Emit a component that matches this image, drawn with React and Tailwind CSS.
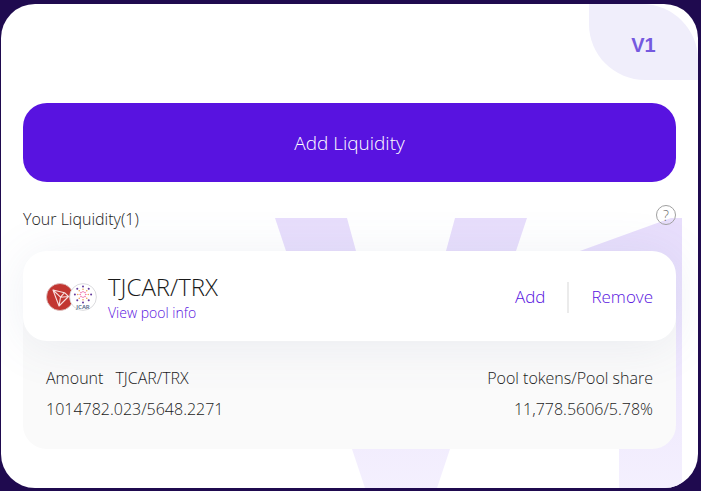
import { useId } from 'react'

const POOLS = [
  {
    pair: 'TJCAR/TRX',
    amount: '1014782.023/5648.2271',
    share: '11,778.5606/5.78%',
  },
]

function Watermark() {
  const id = useId()

  return (
    <svg
      className="absolute right-4 bottom-0 w-[407px] h-[270px] pointer-events-none"
      viewBox="0 0 407 270"
      aria-hidden="true"
    >
      <defs>
        <linearGradient id={id} x1="0" y1="0" x2="0" y2="1">
          <stop offset="0" stopColor="#e8defc" />
          <stop offset="0.15" stopColor="#e8dffc" />
          <stop offset="1" stopColor="#f4f0fe" />
        </linearGradient>
      </defs>
      <path
        fill={`url(#${id})`}
        d="M0 0H72L126 198L180 0H252L162 270H90ZM396 0H407V270H344V50L280 42L396 0Z"
      />
    </svg>
  )
}

function TronLogo() {
  return (
    <svg className="w-7 h-7" viewBox="0 0 28 28" aria-hidden="true">
      <circle cx="14" cy="14" r="13.5" fill="#c23631" stroke="#dcc5c5" strokeWidth="0.8" />
      <path
        d="M7 7L18.5 9.7L22.5 13.5L13 23Z M7 7L14.5 14.2L22.5 13.5 M14.5 14.2L18.5 9.7 M14.5 14.2L13 23"
        fill="none"
        stroke="#f8dfdf"
        strokeWidth="1.1"
        strokeLinejoin="round"
      />
    </svg>
  )
}

function JcarLogo() {
  const rays = [0, 45, 90, 135, 180, 225, 270, 315]

  return (
    <svg className="w-7 h-7" viewBox="0 0 28 28" aria-hidden="true">
      <circle cx="14" cy="14" r="13.4" fill="#fff" stroke="#d2d2d6" strokeWidth="0.8" />
      {rays.map((a) => (
        <g key={a} transform={`rotate(${a} 14 11.5)`}>
          <circle cx="14" cy="8.7" r="0.8" fill="#f06fa8" />
          <circle cx="14" cy="6.2" r="0.8" fill="#f4a65c" />
          <circle cx="14" cy="3.4" r="1" fill="#643a9c" />
        </g>
      ))}
      <text
        x="14"
        y="25.5"
        textAnchor="middle"
        fontSize="6"
        fontWeight="600"
        fill="#47617f"
      >
        JCAR
      </text>
    </svg>
  )
}

function PoolCard({ pair, amount, share }) {
  return (
    <article>
      <div className="relative z-10 flex items-center h-[90px] px-[23px] bg-white rounded-3xl shadow-[0_4px_50px_rgba(86,112,157,0.1)]">
        <div className="flex shrink-0 pt-0.5">
          <TronLogo />
          <div className="-ml-[5px]">
            <JcarLogo />
          </div>
        </div>
        <div className="ml-[11px] pt-1.5">
          <h2 className="text-2xl leading-7">{pair}</h2>
          <a href="#pool" className="block text-sm leading-6 text-[#5813e0]">
            View pool info
          </a>
        </div>
        <div className="ml-auto pt-0.5 flex items-center text-[17px] leading-6 text-[#5813e0]">
          <button type="button">Add</button>
          <span className="w-0.5 h-[31px] mx-[22px] bg-[#ebebeb]" />
          <button type="button">Remove</button>
        </div>
      </div>

      {/* Position details */}
      <dl className="relative -mt-6 flex justify-between px-[23px] pt-[46px] pb-6 bg-[#fafafa] rounded-b-3xl text-base leading-[31px]">
        <div>
          <dt className="flex gap-3">
            <span>Amount</span>
            <span>{pair}</span>
          </dt>
          <dd>{amount}</dd>
        </div>
        <div className="text-right">
          <dt>Pool tokens/Pool share</dt>
          <dd>{share}</dd>
        </div>
      </dl>
    </article>
  )
}

export default function App() {
  return (
    <div className="min-h-screen pt-1 pr-[3px] pb-[3px] pl-px bg-[#1f0a4f] font-['Open_Sans',sans-serif] font-light text-[#1a1a1a]">
      <main className="relative overflow-hidden rounded-[34px] bg-white px-[22px] pb-[39px]">
        <Watermark />

        <div className="relative -mr-[22px] flex justify-end">
          <span className="w-[109px] h-[76px] pt-1.5 flex items-center justify-center rounded-tr-[56px] rounded-bl-[56px] bg-[#f0eefb] font-['Liberation_Sans',sans-serif] text-xl font-bold text-[#7559df]">
            V1
          </span>
        </div>

        <button
          type="button"
          className="relative mt-[23px] pt-0.5 w-full h-[79px] rounded-3xl bg-[#5813e0] text-[19px] text-white"
        >
          Add Liquidity
        </button>

        <div className="relative z-20 mt-[23px] mb-[22px] flex items-start justify-between h-6">
          <h1 className="text-base leading-6 mt-0.5">Your Liquidity(1)</h1>
          <button
            type="button"
            aria-label="About liquidity"
            className="w-5 h-5 pt-0.5 rounded-full border border-[#a0a0a0] text-sm leading-4 text-[#707070]"
          >
            ?
          </button>
        </div>

        {POOLS.map((pool) => (
          <PoolCard key={pool.pair} {...pool} />
        ))}
      </main>
    </div>
  )
}
